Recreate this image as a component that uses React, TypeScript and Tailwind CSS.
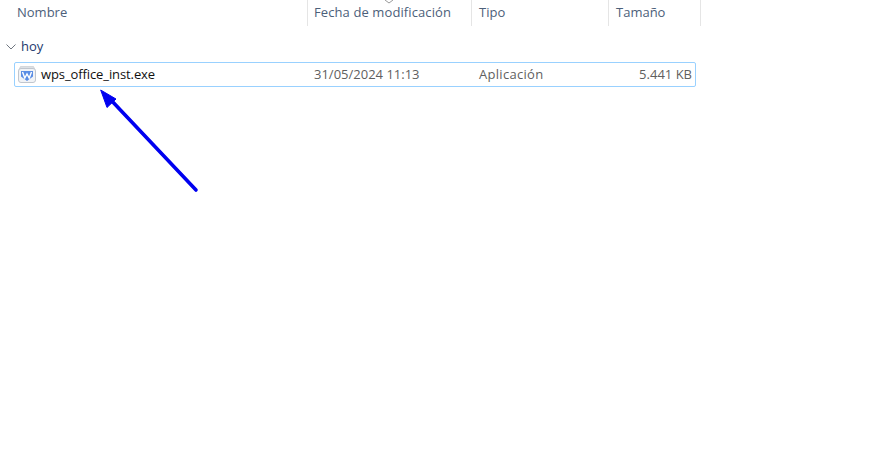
const font = { fontFamily: '"Open Sans", "Noto Sans", sans-serif' };

function WpsIcon() {
  return (
    <svg width="18" height="17" viewBox="0 0 18 17" className="shrink-0">
      <path d="M2.500 0.500h13l1.500 3H1z" fill="#dde0e4" stroke="#c2c7ce" strokeWidth="0.6" />
      <rect x="0.500" y="2.500" width="17" height="14" rx="2.500" fill="#f1f3f6" stroke="#c0c6ce" />
      <path d="M3 5h12v5.500L9 15l-6-4.500z" fill="#5a8de4" />
      <path d="M4.500 6l2.300 6L9 8l2.200 4 2.300-6" fill="none" stroke="#ffffff" strokeWidth="1.400" />
    </svg>
  );
}

function Arrow() {
  return (
    <svg width="120" height="120" viewBox="0 0 120 120" className="absolute left-[90px] top-[80px]">
      <line x1="106" y1="110" x2="20" y2="19" stroke="#0000f0" strokeWidth="3.600" strokeLinecap="round" />
      <path d="M10.700 10L26 19L17 27.500Z" fill="#0000f0" stroke="#0000f0" strokeWidth="1" strokeLinejoin="round" />
    </svg>
  );
}

export default function App() {
  return (
    <div className="relative w-[886px] h-[469px] bg-white overflow-hidden" style={font}>
      {/* column headers */}
      <div className="flex h-[26px] w-[701px] text-[13px] leading-[24px] text-[#4c607a]">
        <div className="w-[308px] pl-[17px] border-r border-[#e5e5e5]">Nombre</div>
        <div className="relative w-[164px] pl-[6px] border-r border-[#e5e5e5] tracking-[0.1px]">
          Fecha de modificación
          <svg width="10" height="4" viewBox="0 0 10 4" className="absolute left-[76px] top-0">
            <path d="M1 0l4 3 4-3" fill="none" stroke="#9a9a9a" />
          </svg>
        </div>
        <div className="w-[137px] pl-[7px] border-r border-[#e5e5e5]">Tipo</div>
        <div className="w-[92px] pl-[7px] border-r border-[#e5e5e5]">Tamaño</div>
      </div>

      {/* group */}
      <div className="flex items-center h-[20px] mt-[11px] pl-[6px] gap-[5px] text-[13px] text-[#1e3a6e]">
        <svg width="10" height="6" viewBox="0 0 10 6">
          <path d="M0.500 0.500L5 5L9.500 0.500" fill="none" stroke="#6f7680" />
        </svg>
        <span>hoy</span>
      </div>

      {/* selected file row */}
      <div className="flex items-center h-[25px] w-[682px] ml-[14px] mt-[5px] rounded-[2px] border border-[#99d1ff] text-[13px]">
        <div className="flex items-center w-[293px] pl-[3px] gap-[5px] text-[#111111]">
          <WpsIcon />
          <span className="tracking-[-0.1px]">wps_office_inst.exe</span>
        </div>
        <div className="w-[164px] pl-[6px] text-[#5f5f5f]">31/05/2024 11:13</div>
        <div className="w-[137px] pl-[7px] text-[#5f5f5f] tracking-[0.3px]">Aplicación</div>
        <div className="w-[83px] text-right text-[#5f5f5f]">5.441 KB</div>
      </div>

      <Arrow />
    </div>
  );
}
